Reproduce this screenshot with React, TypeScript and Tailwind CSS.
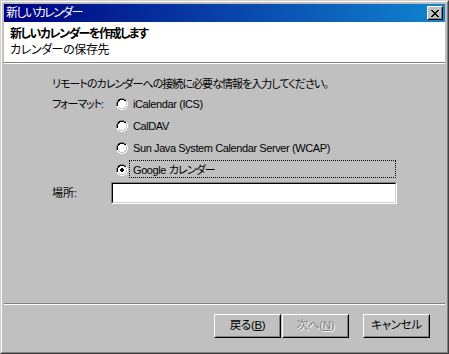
import React from "react";

const JP = "font-['Liberation_Sans','Noto_Sans_CJK_JP',sans-serif] [font-feature-settings:'palt']";

function Radio({ checked }: { checked?: boolean }) {
  return (
    <svg width="12" height="12" viewBox="0 0 12 12" className="shrink-0 block">
      <path d="M4 0h4v1h2v1h1v2h1v4h-1v2h-1v1h-2v1h-4v-1h-2v-1h-1v-2h-1v-4h1v-2h1v-1h2z" fill="#ffffff" />
      <path d="M4 0h4v1h2v1h-2v-1h-4v1h-2v2h-1v4h-1v-4h1v-2h1v-1h2z" fill="#808080" />
      <path d="M4 1h4v1h2v1h-2v-1h-4v1h-1v1h-1v4h-1v-4h1v-2h1v-1h1z" fill="#000000" />
      <path d="M10 2h1v2h1v4h-1v2h-1v1h-2v1h-4v-1h-2v-1h2v1h4v-1h2v-2h1v-4h-1z" fill="#ffffff" />
      <path d="M9 3h1v1h1v4h-1v2h-2v1h-4v-1h-2v-1h2v1h4v-1h1v-1h1v-4h-1z" fill="#c0c0c0" />
      {checked && <path d="M5 4h2v1h1v2h-1v1h-2v-1h-1v-2h1z" fill="#000000" />}
    </svg>
  );
}

function Btn({ children, disabled }: { children: React.ReactNode; disabled?: boolean }) {
  return (
    <div className="w-[67px] h-[24px] border border-t-white border-l-white border-r-black border-b-black">
      <div className="w-full h-full border border-t-[#c0c0c0] border-l-[#c0c0c0] border-r-[#808080] border-b-[#808080] flex items-center justify-center">
        <span
          className={`text-[11.5px] leading-none tracking-[-0.3px] ${disabled ? "text-[#808080] [text-shadow:1px_1px_0_#ffffff]" : "text-black"}`}
        >
          {children}
        </span>
      </div>
    </div>
  );
}

export default function App() {
  return (
    <div className={`w-[449px] h-[354px] bg-[#c0c0c0] ${JP}`}>
      <div className="w-full h-full border border-t-[#d4d0c8] border-l-[#d4d0c8] border-r-[#404040] border-b-[#404040]">
        <div className="w-full h-full border border-t-white border-l-white border-r-[#808080] border-b-[#808080] p-[2px] flex flex-col">
          {/* title bar */}
          <div className="h-[18px] shrink-0 bg-[linear-gradient(to_right,#000080,#1084d0)] flex items-center pl-[2px] pr-[2px]">
            <span className="text-white text-[12px] leading-none tracking-[-1.6px] flex-1">新しいカレンダー</span>
            <div className="w-[16px] h-[14px] border border-t-white border-l-white border-r-black border-b-black bg-[#c0c0c0]">
              <div className="w-full h-full border border-t-[#c0c0c0] border-l-[#c0c0c0] border-r-[#808080] border-b-[#808080] flex items-center justify-center">
                <svg width="8" height="7" viewBox="0 0 8 7" className="block">
                  <path d="M0 0h2v1h1v1h2v-1h1v-1h2v1h-1v1h-1v1h-1v1h1v1h1v1h1v1h-2v-1h-1v-1h-2v1h-1v1h-2v-1h1v-1h1v-1h1v-1h-1v-1h-1v-1h-1z" fill="#000" />
                </svg>
              </div>
            </div>
          </div>
          {/* header */}
          <div className="h-[40px] shrink-0 bg-white pl-[6px] pt-[4px] flex flex-col">
            <div className="text-[12px] font-bold leading-[16px] tracking-[-1.5px] text-black">新しいカレンダーを作成します</div>
            <div className="text-[12px] leading-[16px] tracking-[-0.4px] text-black">カレンダーの保存先</div>
          </div>
          <div className="h-px bg-[#808080] shrink-0" />
          <div className="h-px bg-white shrink-0" />
          {/* body */}
          <div className="flex-1 flex flex-col pl-[48px] pt-[13px]">
            <div className="text-[11px] leading-[14px] tracking-[-0.95px] text-black">リモートのカレンダーへの接続に必要な情報を入力してください。</div>
            <div className="flex mt-[6px]">
              <div className="w-[64px] text-[11px] leading-[14px] tracking-[-1.1px]">フォーマット:</div>
              <div className="flex flex-col gap-[10px] mt-[1px]">
                <div className="flex items-center h-[12px]">
                  <Radio />
                  <span className="ml-[5px] text-[11px] leading-none tracking-[-0.4px]">iCalendar (ICS)</span>
                </div>
                <div className="flex items-center h-[12px]">
                  <Radio />
                  <span className="ml-[5px] text-[11px] leading-none tracking-[-0.4px]">CalDAV</span>
                </div>
                <div className="flex items-center h-[12px]">
                  <Radio />
                  <span className="ml-[5px] text-[11px] leading-none tracking-[-0.4px]">Sun Java System Calendar Server (WCAP)</span>
                </div>
                <div className="flex items-center h-[12px] relative">
                  <Radio checked />
                  <span className="ml-[5px] text-[11px] leading-none tracking-[-0.4px]">Google <span className="tracking-[-0.9px]">カレンダー</span></span>
                  <div className="absolute left-[13px] top-[-4px] w-[267px] h-[18px] border border-dotted border-black pointer-events-none" />
                </div>
              </div>
            </div>
            <div className="flex items-center mt-[6px]">
              <div className="w-[59px] text-[11px] leading-none">場所:</div>
              <div className="w-[286px] h-[22px] border border-t-[#808080] border-l-[#808080] border-r-white border-b-white">
                <div className="w-full h-full border border-t-black border-l-black border-r-[#d4d0c8] border-b-[#d4d0c8] bg-white" />
              </div>
            </div>
          </div>
          <div className="h-px bg-[#808080] shrink-0" />
          <div className="h-px bg-white shrink-0" />
          <div className="h-[45px] shrink-0 flex justify-end items-start pt-[9px] pr-[15px]">
            <Btn>戻る(<u>B</u>)</Btn>
            <div className="ml-[1px]">
              <Btn disabled>次へ(<u>N</u>)</Btn>
            </div>
            <div className="ml-[14px]">
              <Btn>キャンセル</Btn>
            </div>
          </div>
        </div>
      </div>
    </div>
  );
}
